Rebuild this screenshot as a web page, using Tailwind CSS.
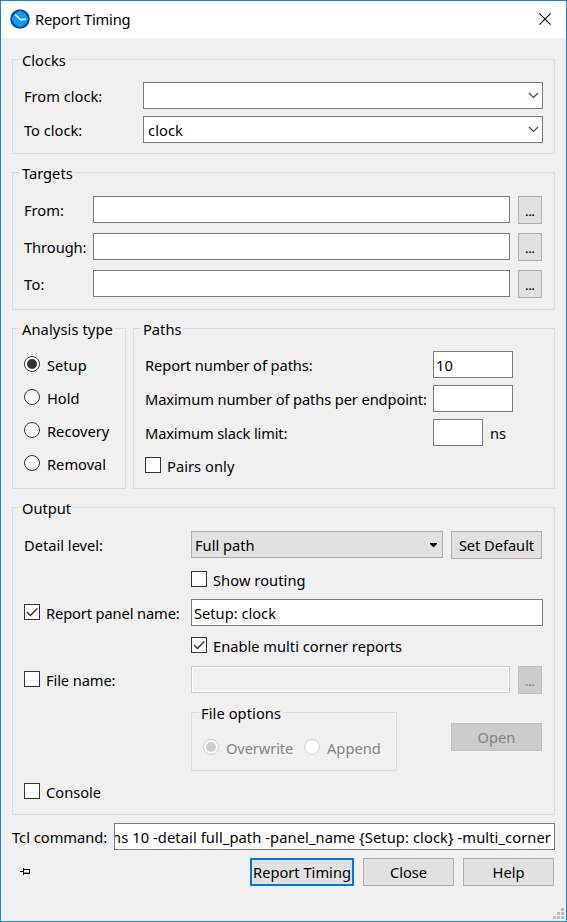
<!DOCTYPE html>
<html lang="en">
<head>
<meta charset="utf-8">
<title>Report Timing</title>
<script src="https://cdn.jsdelivr.net/npm/@tailwindcss/browser@4"></script>
</head>
<body class="w-[567px] h-[922px] overflow-hidden bg-white">
<div class="relative flex flex-col w-[567px] h-[922px] border border-[#1883d7] bg-[#f0f0f0] font-['Noto_Sans',sans-serif] text-[14.67px] leading-[28px] text-black whitespace-nowrap">
  <header class="flex h-[37px] shrink-0 bg-white pl-[9px] pr-[15px]">
    <svg class="mt-2 size-5" viewBox="0 0 20 20"><circle cx="10" cy="10" r="8.7" fill="#0a9df5" stroke="#0c4da2" stroke-width="2.2"/><path d="M10 2.2v1.2M10 16.6v1.2M2.2 10h1.2M16.6 10h1.2" stroke="#5cc4ff"/><path d="M5.2 5.5 10.5 10.6 16 10.2" fill="none" stroke="#fff" stroke-width="1.6"/></svg>
    <h1 class="ml-[5px] leading-[37px] text-[14.67px] tracking-[-0.2px]">Report Timing</h1>
    <svg class="ml-auto mt-3 size-[12px]" viewBox="0 0 12 12"><path d="M.4.4 11.6 11.6M11.6.4.4 11.6" stroke="#000" stroke-width="1.1"/></svg>
  </header>

  <main class="flex flex-col pl-[11px] pt-[21px]">
    <section class="w-[543px] h-[95px] border border-[#dcdcdc] pl-[11px]">
      <h2 class="w-fit -mt-[10px] -ml-1 px-0.5 bg-[#f0f0f0] leading-5">Clocks</h2>
      <div class="mt-3 flex h-[27px]"><span class="w-[119px]">From clock:</span>
        <div class="flex w-[400px] justify-end border border-[#7a7a7a] bg-white"><svg class="mt-[9px] mr-[3px] h-[7px] w-[11px]" viewBox="0 0 11 7"><path d="M1 1 5.5 5.5 10 1" fill="none" stroke="#444" stroke-width="1.1"/></svg></div></div>
      <div class="mt-[7px] flex h-[27px]"><span class="w-[119px]">To clock:</span>
        <div class="flex w-[400px] justify-between border border-[#7a7a7a] bg-white pl-1"><span class="-mt-px tracking-[0.1px]">clock</span><svg class="mt-[9px] mr-[3px] h-[7px] w-[11px]" viewBox="0 0 11 7"><path d="M1 1 5.5 5.5 10 1" fill="none" stroke="#444" stroke-width="1.1"/></svg></div></div>
    </section>

    <section class="mt-[18px] w-[543px] h-[138px] border border-[#dcdcdc] pl-[11px]">
      <h2 class="w-fit -mt-[10px] -ml-1 px-0.5 bg-[#f0f0f0] leading-5">Targets</h2>
      <div class="mt-[13px] flex h-7"><span class="w-[69px]">From:</span><div class="h-[27px] w-[417px] border border-[#7a7a7a] bg-white"></div><button class="ml-2 flex w-6 justify-center border border-[#adadad] bg-[#e1e1e1] pt-px text-[11px] font-bold">...</button></div>
      <div class="mt-[9px] flex h-7"><span class="w-[69px] tracking-[-0.05px]">Through:</span><div class="h-[27px] w-[417px] border border-[#7a7a7a] bg-white"></div><button class="ml-2 flex w-6 justify-center border border-[#adadad] bg-[#e1e1e1] pt-px text-[11px] font-bold">...</button></div>
      <div class="mt-[9px] flex h-7"><span class="w-[69px] tracking-[0.3px]">To:</span><div class="h-[27px] w-[417px] border border-[#7a7a7a] bg-white"></div><button class="ml-2 flex w-6 justify-center border border-[#adadad] bg-[#e1e1e1] pt-px text-[11px] font-bold">...</button></div>
    </section>

    <div class="mt-[18px] flex gap-[7px]">
      <section class="w-[114px] h-[161px] border border-[#dcdcdc] pl-[11px]">
        <h2 class="w-fit -mt-[10px] -ml-1 px-0.5 bg-[#f0f0f0] leading-5 tracking-[0.1px]">Analysis type</h2>
        <div class="mt-[17px] flex flex-col gap-[17px] leading-[18px]">
          <label class="flex h-4 gap-[7px]"><i class="flex size-4 items-center justify-center rounded-full border border-[#333] bg-white"><i class="size-[10px] rounded-full bg-[#333]"></i></i>Setup</label>
          <label class="flex h-4 gap-[7px]"><i class="size-4 rounded-full border border-[#333] bg-white"></i>Hold</label>
          <label class="flex h-4 gap-[7px]"><i class="size-4 rounded-full border border-[#333] bg-white"></i>Recovery</label>
          <label class="flex h-4 gap-[7px]"><i class="size-4 rounded-full border border-[#333] bg-white"></i>Removal</label>
        </div>
      </section>
      <section class="w-[422px] h-[161px] border border-[#dcdcdc] pl-[11px]">
        <h2 class="w-fit -mt-[10px] -ml-1 px-0.5 bg-[#f0f0f0] leading-5">Paths</h2>
        <div class="mt-3 flex h-[27px]"><span class="w-[288px] tracking-[-0.09px]">Report number of paths:</span><div class="w-20 border border-[#7a7a7a] bg-white pl-0.5"><span class="block -mt-px tracking-[0.2px]">10</span></div></div>
        <div class="mt-[7px] flex h-[27px]"><span class="w-[288px] tracking-[-0.11px]">Maximum number of paths per endpoint:</span><div class="w-20 border border-[#7a7a7a] bg-white"></div></div>
        <div class="mt-[7px] flex h-[27px]"><span class="w-[288px] tracking-[-0.15px]">Maximum slack limit:</span><div class="mr-[7px] w-[50px] border border-[#7a7a7a] bg-white"></div><span>ns</span></div>
        <label class="mt-[11px] flex h-4 gap-1.5 leading-[18px] tracking-[0.05px]"><i class="size-4 border border-[#333] bg-white"></i>Pairs only</label>
      </section>
    </div>

    <section class="mt-[18px] w-[543px] h-[308px] border border-[#dcdcdc] pl-[11px]">
      <h2 class="w-fit -mt-[10px] -ml-1 px-0.5 bg-[#f0f0f0] leading-5">Output</h2>
      <div class="mt-[13px] flex h-7"><span class="w-[167px]">Detail level:</span>
        <div class="flex h-[27px] w-[252px] justify-between border border-[#adadad] bg-[#e1e1e1] pl-[3px]"><span class="-mt-px">Full path</span><svg class="mt-[11px] mr-[5px] h-1 w-[7px]" viewBox="0 0 7 4"><path d="M0 0h7v1L4 4H3L0 1z"/></svg></div>
        <button class="ml-2 w-[91px] border border-[#adadad] bg-[#e1e1e1]"><span class="block -mt-px tracking-[-0.05px]">Set Default</span></button></div>
      <label class="mt-3 ml-[167px] flex h-4 gap-1.5 leading-[18px] tracking-[0.07px]"><i class="size-4 border border-[#333] bg-white"></i>Show routing</label>
      <div class="mt-3 flex h-[27px]">
        <label class="mt-[5px] flex h-4 w-[167px] gap-1.5 leading-[18px] tracking-[-0.12px]"><i class="flex size-4 border border-[#333] bg-white"><svg class="size-[14px]" viewBox="0 0 14 14"><path d="M2 7 5.4 10.4 12.3 3.4" fill="none" stroke="#333" stroke-width="1.4"/></svg></i>Report panel name:</label>
        <div class="w-[352px] border border-[#7a7a7a] bg-white pl-0.5"><span class="block -mt-px">Setup: clock</span></div></div>
      <label class="mt-[11px] ml-[167px] flex h-4 gap-1.5 leading-[18px]"><i class="flex size-4 border border-[#333] bg-white"><svg class="size-[14px]" viewBox="0 0 14 14"><path d="M2 7 5.4 10.4 12.3 3.4" fill="none" stroke="#333" stroke-width="1.4"/></svg></i>Enable multi corner reports</label>
      <div class="mt-[13px] flex h-7">
        <label class="mt-[5px] flex h-4 w-[167px] gap-1.5 leading-[18px] tracking-[-0.1px]"><i class="size-4 border border-[#333] bg-white"></i>File name:</label>
        <div class="h-[27px] w-[319px] border border-[#ccc] bg-white p-px"><div class="h-full bg-[#f0f0f0]"></div></div>
        <button class="ml-2 flex w-6 justify-center border border-[#bfbfbf] bg-[#ccc] pt-px text-[11px] font-bold text-[#838383]">...</button></div>
      <div class="mt-[18px] ml-[167px] flex">
        <section class="w-[206px] h-[59px] border border-[#dcdcdc] pl-[11px]">
          <h3 class="w-fit -mt-[10px] -ml-1 px-0.5 bg-[#f0f0f0] leading-5 tracking-[0.08px]">File options</h3>
          <div class="mt-4 flex leading-[18px] text-[#838383]">
            <label class="flex h-4 w-[101px] gap-[7px] tracking-[-0.1px]"><i class="flex size-4 items-center justify-center rounded-full border border-[#ccc] bg-white"><i class="size-[10px] rounded-full bg-[#ccc]"></i></i>Overwrite</label>
            <label class="flex h-4 gap-[7px]"><i class="size-4 rounded-full border border-[#ccc] bg-white"></i>Append</label>
          </div>
        </section>
        <button class="ml-[54px] mt-[11px] h-7 w-[91px] border border-[#bfbfbf] bg-[#ccc] text-[#838383]"><span class="block -mt-px">Open</span></button>
      </div>
      <label class="mt-3 flex h-4 gap-1.5 leading-[18px]"><i class="size-4 border border-[#333] bg-white"></i>Console</label>
    </section>

    <div class="mt-2 flex h-[27px]"><span class="w-[102px]">Tcl command:</span>
      <div class="flex w-[441px] justify-end overflow-hidden border border-[#7a7a7a] bg-white pr-[3px]"><span class="-mt-px tracking-[0.1px]">hs 10 -detail full_path -panel_name {Setup: clock} -multi_corner</span></div></div>
    <footer class="mt-2 flex h-7 w-[542px]">
      <svg class="mt-[10px] ml-2 mr-auto h-[7px] w-[10px]" viewBox="0 0 10 7" shape-rendering="crispEdges"><path d="M0 3h4v1H0zM3 0h1v7H3zM4 1h6v1H4zM9 1h1v5H9zM4 5h6v1H4z" fill="#000"/><path d="M4 4h5v1H4z" fill="#999"/><path d="M4 2h5v2H4z" fill="#fff"/></svg>
      <button class="flex w-[104px] justify-center border-2 border-[#0078d7] bg-[#e1e1e1]"><span class="-mt-0.5">Report Timing</span></button>
      <button class="ml-[9px] w-[91px] border border-[#adadad] bg-[#e1e1e1]"><span class="block -mt-px">Close</span></button>
      <button class="ml-[9px] w-[91px] border border-[#adadad] bg-[#e1e1e1]"><span class="block -mt-px">Help</span></button>
    </footer>
  </main>
  <svg class="absolute right-[2px] bottom-[2px] size-[11px]" viewBox="0 0 11 11" shape-rendering="crispEdges"><path d="M8 0h3v3H8zM4 4h3v3H4zM8 4h3v3H8zM0 8h3v3H0zM4 8h3v3H4zM8 8h3v3H8z" fill="#bfbfbf"/></svg>
</div>
</body>
</html>
